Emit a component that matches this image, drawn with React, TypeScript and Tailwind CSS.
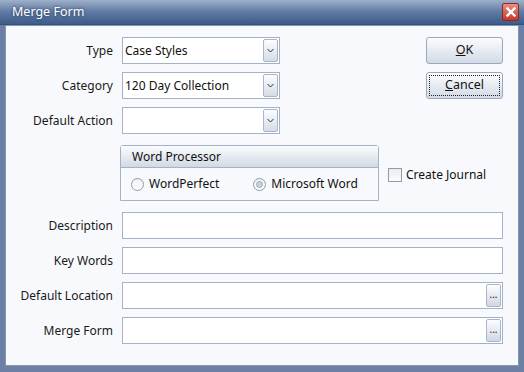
import React from "react";

const font = { fontFamily: '"Noto Sans", "Open Sans", sans-serif' };

function Chevron() {
  return (
    <svg width="7" height="5" viewBox="0 0 7 5">
      <path d="M0.5 1 L3.5 4 L6.5 1" fill="none" stroke="#333" strokeWidth="1" />
    </svg>
  );
}

function Select({ value }: { value: string }) {
  return (
    <div className="flex h-[27px] w-[158px] items-center border border-[#a4b2c8] bg-white pl-[2px] pr-[1px]">
      <span className="flex-1 text-[12px] text-[#111]">{value}</span>
      <div className="flex h-[23px] w-[15px] items-center justify-center rounded-[2px] border border-[#a9b5c8] bg-gradient-to-b from-[#fdfdfe] to-[#d5dbe6]">
        <Chevron />
      </div>
    </div>
  );
}

function TextBox({ browse }: { browse?: boolean }) {
  return (
    <div className="flex h-[27px] flex-1 items-center justify-end border border-[#a4b2c8] bg-white pr-[1px]">
      {browse && (
        <div className="flex h-[23px] w-[15px] items-center justify-center rounded-[2px] border border-[#a9b5c8] bg-gradient-to-b from-[#fdfdfe] to-[#d0d7e3] pb-[4px] text-[10px] leading-none text-[#222]">
          ...
        </div>
      )}
    </div>
  );
}

function Row({ label, children, className = "" }: { label: string; children: React.ReactNode; className?: string }) {
  return (
    <div className={"flex items-center " + className}>
      <div className="w-[108px] pr-[1px] text-right text-[12px] text-[#1a1a1a]">{label}</div>
      <div className="ml-[8px] flex flex-1 items-center">{children}</div>
    </div>
  );
}

function Radio({ checked, label }: { checked?: boolean; label: string }) {
  return (
    <div className="flex items-center gap-[5px]">
      <div className="flex h-[13px] w-[13px] items-center justify-center rounded-full border border-[#8d9ab0] bg-gradient-to-b from-[#eef1f5] to-[#ffffff]">
        {checked && <div className="h-[7px] w-[7px] rounded-full border border-[#a3adbf] bg-[#c9d0dc]" />}
      </div>
      <span className="text-[12px] text-[#111]">{label}</span>
    </div>
  );
}

function Button({ children, focused }: { children: React.ReactNode; focused?: boolean }) {
  return (
    <div className="flex h-[27px] w-[77px] items-center justify-center rounded-[3px] border border-[#9aa8be] bg-gradient-to-b from-[#fbfcfd] to-[#d3dae6] p-[2px]">
      <div
        className={
          "flex h-full w-full items-center justify-center text-[12.5px] text-[#111] " +
          (focused ? "border border-dotted border-[#222]" : "")
        }
      >
        {children}
      </div>
    </div>
  );
}

export default function App() {
  return (
    <div style={font} className="flex h-[372px] w-[524px] flex-col bg-[#6b80a4]">
      {/* title bar */}
      <div className="flex h-[25px] items-center justify-between border-b border-[#34507c] bg-gradient-to-b from-[#9eb0c9] via-[#5f7aa2] to-[#3e5c8a] pl-[12px] pr-[5px]">
        <span className="text-[12.5px] text-white [text-shadow:0_0_3px_#1d3357]">Merge Form</span>
        <div className="flex h-[18px] w-[17px] items-center justify-center rounded-[2px] border border-[#8a2a24] bg-gradient-to-b from-[#ec8c82] to-[#c7352a]">
          <svg width="10" height="10" viewBox="0 0 10 10">
            <path d="M1.5 1.5 L8.5 8.5 M8.5 1.5 L1.5 8.5" stroke="white" strokeWidth="2.4" strokeLinecap="square" />
          </svg>
        </div>
      </div>

      {/* client area */}
      <div className="mx-[5px] mb-[6px] flex flex-1 flex-col border border-[#8596b3] bg-[#f7f9fc] pt-[11px] pr-[15px]">
        <div className="flex">
          <div className="flex flex-col gap-[8px]">
            <Row label="Type">
              <Select value="Case Styles" />
            </Row>
            <Row label="Category">
              <Select value="120 Day Collection" />
            </Row>
            <Row label="Default Action">
              <Select value="" />
            </Row>
          </div>
          <div className="ml-auto flex flex-col gap-[8px] pt-0">
            <Button>
              <span className="underline">O</span>K
            </Button>
            <Button focused>
              <span className="underline">C</span>ancel
            </Button>
          </div>
        </div>

        <div className="mt-[11px] flex items-center">
          <div className="ml-[114px] flex h-[56px] w-[259px] flex-col rounded-t-[3px] border border-[#a4b2c8]">
            <div className="flex h-[22px] items-center border-b border-[#a4b2c8] bg-gradient-to-b from-[#fbfcfd] to-[#d2d9e4] pl-[11px] text-[12px] text-[#111]">
              Word Processor
            </div>
            <div className="flex flex-1 items-center gap-[34px] pl-[10px]">
              <Radio label="WordPerfect" />
              <Radio checked label="Microsoft Word" />
            </div>
          </div>
          <div className="ml-[9px] mt-[4px] flex items-center gap-[4px]">
            <div className="h-[14px] w-[14px] border border-[#8d9ab0] bg-gradient-to-b from-[#e9edf2] to-[#fafbfc]" />
            <span className="text-[12px] text-[#111]">Create Journal</span>
          </div>
        </div>

        <div className="mt-[11px] flex flex-col gap-[8px]">
          <Row label="Description">
            <TextBox />
          </Row>
          <Row label="Key Words">
            <TextBox />
          </Row>
          <Row label="Default Location">
            <TextBox browse />
          </Row>
          <Row label="Merge Form">
            <TextBox browse />
          </Row>
        </div>
      </div>
    </div>
  );
}
